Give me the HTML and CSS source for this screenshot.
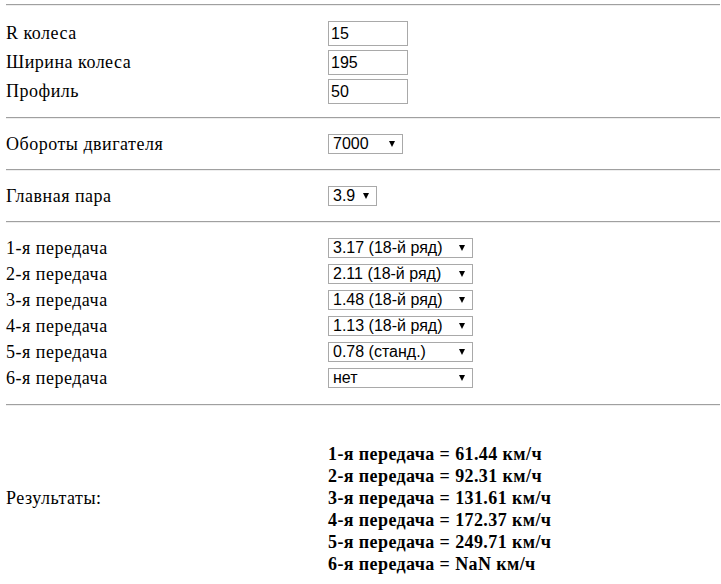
FILE: index.html
```html
<!DOCTYPE html>
<html lang="ru">
<head>
    <meta charset="UTF-8">
    <meta name="viewport" content="width=device-width, initial-scale=1.0">
    <title>Скорость на передачах</title>
    <link rel="stylesheet" href="styles.css">
</head>
<body>
    <hr class="rule rule-first">
    <div class="section section-wheel">
        <div class="row row-input"><label class="label">R колеса</label><input class="field" value="15"></div>
        <div class="row row-input"><label class="label">Ширина колеса</label><input class="field" value="195"></div>
        <div class="row row-input"><label class="label">Профиль</label><input class="field" value="50"></div>
    </div>
    <hr class="rule">
    <div class="section">
        <div class="row row-select">
            <label class="label">Обороты двигателя</label>
            <span class="select"><select class="w-rpm"><option>7000</option></select></span>
        </div>
    </div>
    <hr class="rule">
    <div class="section">
        <div class="row row-select">
            <label class="label">Главная пара</label>
            <span class="select"><select class="w-pair"><option>3.9</option></select></span>
        </div>
    </div>
    <hr class="rule">
    <div class="section section-gears">
        <div class="row row-select">
            <label class="label">1-я передача</label>
            <span class="select"><select class="w-gear"><option>3.17 (18-й ряд)</option></select></span>
        </div>
        <div class="row row-select">
            <label class="label">2-я передача</label>
            <span class="select"><select class="w-gear"><option>2.11 (18-й ряд)</option></select></span>
        </div>
        <div class="row row-select">
            <label class="label">3-я передача</label>
            <span class="select"><select class="w-gear"><option>1.48 (18-й ряд)</option></select></span>
        </div>
        <div class="row row-select">
            <label class="label">4-я передача</label>
            <span class="select"><select class="w-gear"><option>1.13 (18-й ряд)</option></select></span>
        </div>
        <div class="row row-select">
            <label class="label">5-я передача</label>
            <span class="select"><select class="w-gear"><option>0.78 (станд.)</option></select></span>
        </div>
        <div class="row row-select">
            <label class="label">6-я передача</label>
            <span class="select"><select class="w-gear"><option>нет</option></select></span>
        </div>
    </div>
    <hr class="rule">
    <div class="results">
        <div class="label">Результаты:</div>
        <div class="speeds">
            <div>1-я передача = 61.44 км/ч</div>
            <div>2-я передача = 92.31 км/ч</div>
            <div>3-я передача = 131.61 км/ч</div>
            <div>4-я передача = 172.37 км/ч</div>
            <div>5-я передача = 249.71 км/ч</div>
            <div>6-я передача = NaN км/ч</div>
        </div>
    </div>
</body>
</html>
```

FILE: styles.css
```css
body {
    margin: 0;
    padding: 0 1px 0 6px;
    font-family: "Liberation Serif", "Times New Roman", serif;
    font-size: 18px;
    letter-spacing: 0.5px;
    color: #000;
    background: #fff;
}
.rule {
    margin: 0;
    height: 0;
    border: 0;
    border-top: 1px solid #a0a0a0;
    border-bottom: 1px solid #eeeeee;
}
.rule-first {
    margin-top: 4px;
}
.section {
    padding: 12px 0;
}
.section-wheel {
    padding: 13px 0 11px;
}
.section-gears {
    padding: 12px 0 13px;
}
.row {
    display: grid;
    grid-template-columns: 322px auto;
    align-items: center;
    justify-items: start;
}
.row-input {
    height: 29px;
}
.row-select {
    height: 26px;
}
.field {
    width: 80px;
    height: 25px;
    box-sizing: border-box;
    margin: 0;
    padding: 0 2px;
    border: 1px solid #a9a9a9;
    font-family: "Liberation Sans", Arial, sans-serif;
    font-size: 16px;
    letter-spacing: 0;
    color: #000;
}
.select {
    position: relative;
    display: inline-block;
    line-height: 0;
}
.select select {
    -webkit-appearance: none;
    appearance: none;
    height: 20px;
    box-sizing: border-box;
    margin: 0;
    padding: 0 0 0 4px;
    border: 1px solid #a9a9a9;
    border-radius: 0;
    background: #fff;
    font-family: "Liberation Sans", Arial, sans-serif;
    font-size: 16px;
    letter-spacing: 0;
    line-height: 18px;
    color: #000;
}
.select::after {
    content: "";
    position: absolute;
    right: 8px;
    top: 7px;
    border-left: 3.5px solid transparent;
    border-right: 3.5px solid transparent;
    border-top: 6px solid #000;
    pointer-events: none;
}
.w-rpm {
    width: 75px;
}
.w-pair {
    width: 49px;
}
.w-gear {
    width: 145px;
}
.results {
    display: grid;
    grid-template-columns: 322px auto;
    align-items: center;
    padding-top: 15px;
}
.speeds {
    padding-top: 22px;
    font-weight: bold;
    line-height: 22px;
    letter-spacing: 0.4px;
}
```
